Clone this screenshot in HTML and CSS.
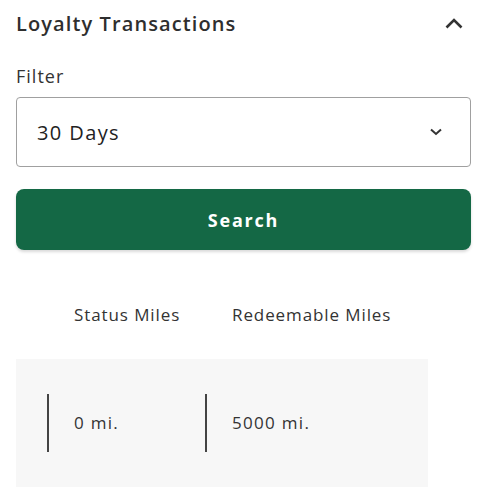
FILE: index.html
```html
<!DOCTYPE html>
<html lang="en">

<head>
    <meta charset="UTF-8">
    <meta name="viewport" content="width=device-width, initial-scale=1.0">
    <title>Loyalty Transactions</title>
    <link rel="stylesheet" href="styles.css">
</head>

<body>

    <!-- Section header -->
    <div class="section-head">
        <h2>Loyalty Transactions</h2>
        <svg class="chevron-up" width="18" height="11" viewBox="0 0 18 11">
            <path d="M1.5 9.5 L9 2 L16.5 9.5" fill="none" stroke="#333" stroke-width="2.6" />
        </svg>
    </div>

    <!-- Filter -->
    <label class="filter-label">Filter</label>
    <div class="select">
        <span>30 Days</span>
        <svg width="12" height="8" viewBox="0 0 12 8">
            <path d="M1 1.5 L6 6 L11 1.5" fill="none" stroke="#333" stroke-width="2" />
        </svg>
    </div>

    <button class="search-btn">Search</button>

    <!-- Miles -->
    <div class="miles-head">
        <div class="miles-col">Status Miles</div>
        <div class="miles-col">Redeemable Miles</div>
    </div>

    <div class="miles-box">
        <div class="miles-col value">0 mi.</div>
        <div class="miles-col value">5000 mi.</div>
    </div>

</body>

</html>
```

FILE: styles.css
```css
body {
    font-family: "Open Sans", Arial, sans-serif;
    margin: 0;
    padding: 0 16px;
    color: #333;
    background-color: white;
}

.section-head {
    display: flex;
    justify-content: space-between;
    align-items: center;
    height: 47px;
}

.section-head h2 {
    margin: 0;
    font-size: 20px;
    font-weight: 600;
    color: #2e2e2e;
    letter-spacing: 1.1px;
}

.chevron-up {
    margin-right: 8px;
}

.filter-label {
    display: block;
    margin-top: 17px;
    font-size: 18px;
    line-height: 24px;
    letter-spacing: 1px;
    color: #333;
}

.select {
    display: flex;
    justify-content: space-between;
    align-items: center;
    height: 68px;
    margin-top: 9px;
    padding: 0 28px 0 20px;
    border: 1px solid #a0a0a0;
    border-radius: 4px;
    font-size: 20px;
    letter-spacing: 1.4px;
    color: #222;
}

.search-btn {
    display: block;
    width: 100%;
    height: 61px;
    margin-top: 22px;
    border: none;
    border-radius: 8px;
    background-color: #146845;
    color: white;
    font-family: inherit;
    font-size: 18px;
    font-weight: 700;
    letter-spacing: 1.8px;
    box-shadow: 0 2px 3px rgba(0, 0, 0, 0.15);
}

.miles-head {
    display: flex;
    padding: 53px 0 0 31px;
    font-size: 17px;
    line-height: 24px;
    letter-spacing: 0.9px;
    color: #333;
}

.miles-col {
    width: 131px;
    padding-left: 26px;
    border-left: 1px solid transparent;
    white-space: nowrap;
}

.miles-box {
    display: flex;
    align-items: center;
    width: 381px;
    height: 128px;
    margin-top: 32px;
    padding-left: 31px;
    background-color: #f7f7f7;
}

.miles-box .value {
    height: 58px;
    line-height: 58px;
    border-left: 2px solid #444;
    padding-left: 25px;
    font-size: 17px;
    letter-spacing: 1.3px;
}
```
